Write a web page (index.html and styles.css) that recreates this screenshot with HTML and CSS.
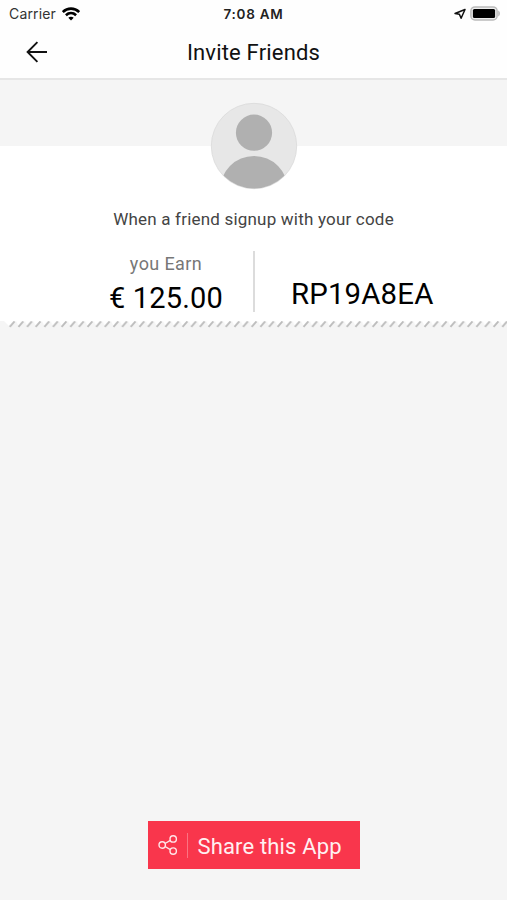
FILE: index.html
```
<!DOCTYPE html>
<html lang="en">
<head>
    <meta charset="UTF-8">
    <meta name="viewport" content="width=device-width, initial-scale=1.0">
    <title>Invite Friends</title>
    <link rel="stylesheet" href="styles.css">
</head>
<body>
    <header>
        <div class="status-bar">
            <div class="carrier">
                <span>Carrier</span>
                <svg width="18" height="14" viewBox="0 0 18 14" fill="none" stroke="#000" stroke-width="2.6">
                    <path d="M.8 5C5.400.5 12.600.5 17.200 5"/>
                    <path d="M3.900 8.200c3-2.800 7.200-2.800 10.200 0"/>
                    <path d="M9 13.500l-2.700-2.800c1.500-1.400 3.900-1.400 5.400 0z" fill="#000" stroke="none"/>
                </svg>
            </div>
            <span class="time">7:08 AM</span>
            <div class="battery">
                <svg width="12" height="12" viewBox="0 0 12 12" fill="none" stroke="#111" stroke-width="1.500" stroke-linejoin="round">
                    <path d="M11 1.500L1 5.500l4.400.8 1.700 4z"/>
                </svg>
                <svg width="31" height="15" viewBox="0 0 31 15">
                    <rect x=".9" y=".9" width="26.200" height="13" rx="4" fill="#eee" stroke="#bbb" stroke-width="1.500"/>
                    <rect x="2.900" y="2.900" width="22.200" height="9.200" rx="1.500" fill="#000"/>
                    <path d="M28.200 4.500v6c2.300-.9 2.300-5.100 0-6z" fill="#bbb"/>
                </svg>
            </div>
        </div>
        <div class="nav-bar">
            <a class="back" href="#" aria-label="Back">
                <svg width="22" height="22" viewBox="0 0 22 22" fill="none" stroke="#111" stroke-width="1.900">
                    <path d="M21 11H1.500M11.400 1.200L1.600 11l9.800 9.800"/>
                </svg>
            </a>
            <h1>Invite Friends</h1>
        </div>
    </header>

    <main>
        <section class="card">
            <svg class="avatar" width="88" height="88" viewBox="0 0 88 88">
                <clipPath id="round"><circle cx="44" cy="44" r="42.500"/></clipPath>
                <circle cx="44" cy="44" r="42.700" fill="#e7e7e7" stroke="#d9d9d9" stroke-width=".8"/>
                <circle cx="44" cy="30.700" r="18.100" fill="#b0b0b0"/>
                <circle cx="44" cy="88" r="34" fill="#b0b0b0" clip-path="url(#round)"/>
            </svg>
            <p class="message">When a friend signup with your code</p>
            <div class="details">
                <div class="earn">
                    <span class="label">you Earn</span>
                    <span class="amount">€ 125.00</span>
                </div>
                <div class="code">RP19A8EA</div>
            </div>
        </section>
        <svg class="edge" width="507" height="8">
            <defs>
                <pattern id="teeth" x="7.400" width="8.640" height="8" patternUnits="userSpaceOnUse">
                    <path d="M0 0h8.640L3 6z" fill="#fff"/>
                    <path d="M2.400 5.800L7.200.4" stroke="#bcbcbc" stroke-width="1.900"/>
                </pattern>
            </defs>
            <path d="M0 0h9v5L4 0z" fill="#fff"/>
            <rect x="7.400" width="500" height="8" fill="url(#teeth)"/>
        </svg>
        <button type="button" class="share">
            <svg width="20" height="22" viewBox="0 0 20 22" fill="none" stroke="#ffe5e8" stroke-width="1.400">
                <circle cx="4.200" cy="11" r="3.200"/>
                <circle cx="15.200" cy="4.900" r="3.200"/>
                <circle cx="15.200" cy="17.100" r="3.200"/>
                <path d="M7 9.500l5.400-3.100M7 12.500l5.400 3.100"/>
            </svg>
            <span>Share this App</span>
        </button>
    </main>
</body>
</html>
```
FILE: styles.css
```
* {
    margin: 0;
    padding: 0;
    box-sizing: border-box;
    font-family: Roboto, sans-serif;
}

body {
    background-color: #f5f5f5;
    color: #000;
    height: 100vh;
    display: flex;
    flex-direction: column;
}

svg {
    display: block;
    flex-shrink: 0;
}

header {
    height: 80px;
    background: #fefefe;
    border-bottom: 2px solid #e6e6e6;
}

.status-bar {
    height: 27px;
    padding: 0 6px 0 9px;
    display: grid;
    grid-template-columns: 1fr auto 1fr;
    align-items: center;
}

.status-bar span {
    font-family: Inter, sans-serif;
}

.carrier {
    display: flex;
    align-items: center;
    gap: 6px;
    font-size: 14px;
    letter-spacing: 0.15px;
    color: #333;
}

.time {
    margin-right: 3px;
    font-size: 13.5px;
    font-weight: 600;
    letter-spacing: 0.75px;
    color: #222;
}

.battery {
    display: flex;
    justify-content: flex-end;
    align-items: center;
    gap: 4px;
}

.nav-bar {
    height: 50px;
    padding: 0 26px;
    display: grid;
    grid-template-columns: 1fr auto 1fr;
    align-items: center;
}

h1 {
    font-size: 22px;
    font-weight: 400;
    letter-spacing: 0.18px;
    color: #111;
}

main {
    flex: 1;
    display: flex;
    flex-direction: column;
    align-items: center;
}

.card {
    width: 100%;
    height: 175px;
    margin-top: 66px;
    background: #fff;
    display: flex;
    flex-direction: column;
    align-items: center;
}

.avatar {
    margin-top: -44px;
}

.message {
    margin-top: 19px;
    font-size: 17px;
    line-height: 20px;
    letter-spacing: 0.2px;
    color: #444;
}

.details {
    width: 100%;
    margin-top: 22px;
    display: grid;
    grid-template-columns: 255px 1fr;
}

.earn {
    height: 61px;
    padding-left: 79px;
    border-right: 2px solid #dcdcdc;
    display: flex;
    flex-direction: column;
    align-items: center;
}

.label {
    margin-top: 2px;
    font-size: 18px;
    line-height: 21px;
    letter-spacing: 0.4px;
    color: #777;
}

.amount {
    margin-top: 7px;
    font-size: 29px;
    line-height: 34px;
    letter-spacing: 0.15px;
}

.code {
    padding: 26px 0 0 36px;
    font-size: 29.4px;
    line-height: 34px;
    letter-spacing: 0.15px;
}

.share {
    width: 212px;
    height: 48px;
    margin: auto 0 31px;
    padding-left: 10px;
    display: flex;
    align-items: center;
    background: #f9364c;
    border: none;
    color: #fff0f1;
    font-size: 22px;
    letter-spacing: 0.15px;
    cursor: pointer;
}

.share span {
    height: 25px;
    margin-left: 9px;
    padding-left: 10px;
    border-left: 1px solid #fb7382;
    line-height: 27px;
}
```
